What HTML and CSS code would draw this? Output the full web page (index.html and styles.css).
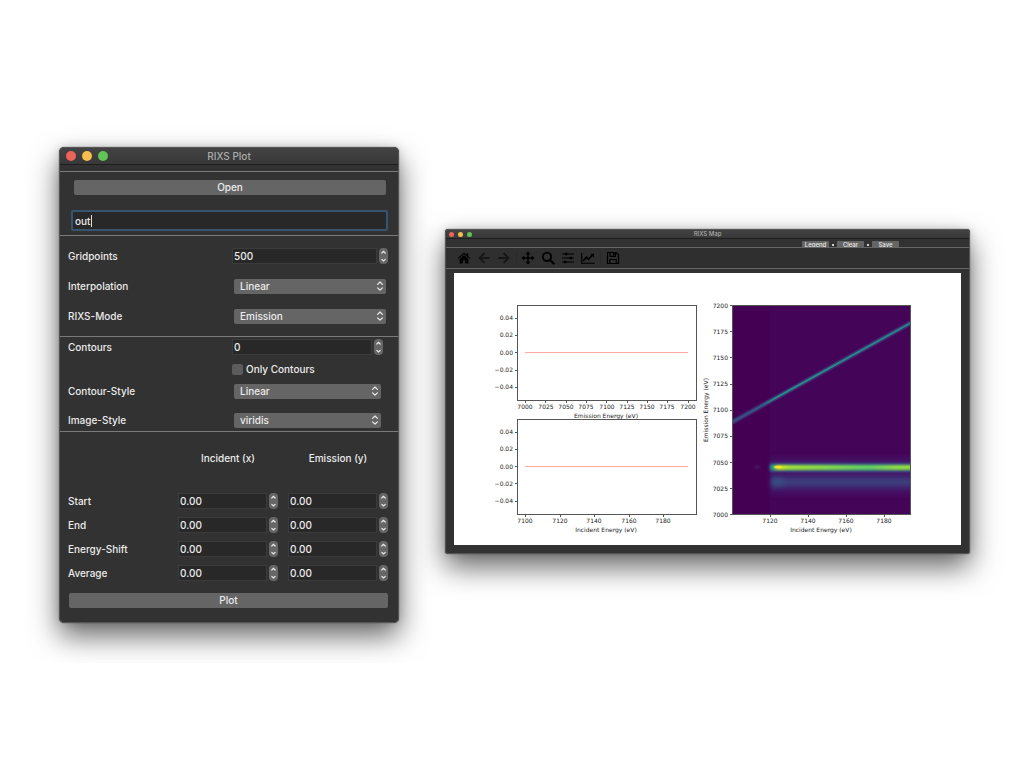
FILE: index.html
```html
<!DOCTYPE html>
<html lang="en">
<head>
<meta charset="utf-8">
<title>RIXS Plot</title>
<link rel="stylesheet" href="styles.css">
</head>
<body>
<svg class="defs" aria-hidden="true">
  <symbol id="updown" viewBox="0 0 8 12"><path d="M1.6 4.4 4 2l2.4 2.4M1.6 7.8 4 10.2l2.4-2.4" fill="none" stroke="currentColor" stroke-width="1.2" stroke-linecap="round" stroke-linejoin="round"/></symbol>
  <symbol id="up" viewBox="0 0 8 8"><path d="M2.3 5 4 3.4 5.700 5" fill="none" stroke="currentColor" stroke-width="1.2" stroke-linecap="round"/></symbol>
  <symbol id="down" viewBox="0 0 8 8"><path d="M2.3 3.400 4 5 5.700 3.400" fill="none" stroke="currentColor" stroke-width="1.2" stroke-linecap="round"/></symbol>
</svg>
<main class="desktop">
  <form class="window plot-window" onsubmit="return false">
    <header class="titlebar">
      <span class="lights"><i class="light red"></i><i class="light yellow"></i><i class="light green"></i></span>
      <h1 class="title">RIXS Plot</h1>
    </header>
    <section class="section file">
      <button class="push open" type="button">Open</button>
      <div class="filename"><input class="file-input" type="text" value="out" aria-label="File name"><span class="caret"></span></div>
    </section>
    <section class="section grid-settings">
      <label for="gridpoints">Gridpoints</label>
      <div class="spin"><input id="gridpoints" type="text" value="500"><span class="stepper"><button type="button" aria-label="Increase"><svg><use href="#up"/></svg></button><button type="button" aria-label="Decrease"><svg><use href="#down"/></svg></button></span></div>
      <label for="interpolation">Interpolation</label>
      <div class="drop"><select id="interpolation"><option>Linear</option></select><svg><use href="#updown"/></svg></div>
      <label for="mode">RIXS-Mode</label>
      <div class="drop"><select id="mode"><option>Emission</option></select><svg><use href="#updown"/></svg></div>
    </section>
    <section class="section contour-settings">
      <label for="contours">Contours</label>
      <div class="spin"><input id="contours" type="text" value="0"><span class="stepper"><button type="button" aria-label="Increase"><svg><use href="#up"/></svg></button><button type="button" aria-label="Decrease"><svg><use href="#down"/></svg></button></span></div>
      <label class="check"><input type="checkbox">Only Contours</label>
      <label for="cstyle">Contour-Style</label>
      <div class="drop"><select id="cstyle"><option>Linear</option></select><svg><use href="#updown"/></svg></div>
      <label class="last" for="istyle">Image-Style</label>
      <div class="drop last"><select id="istyle"><option>viridis</option></select><svg><use href="#updown"/></svg></div>
    </section>
    <section class="section ranges">
      <div class="range-grid">
        <span class="head incident">Incident (x)</span><span class="head">Emission (y)</span>
        <span>Start</span>
        <div class="spin"><input type="text" value="0.00" aria-label="Start incident"><span class="stepper"><button type="button" aria-label="Increase"><svg><use href="#up"/></svg></button><button type="button" aria-label="Decrease"><svg><use href="#down"/></svg></button></span></div>
        <div class="spin"><input type="text" value="0.00" aria-label="Start emission"><span class="stepper"><button type="button" aria-label="Increase"><svg><use href="#up"/></svg></button><button type="button" aria-label="Decrease"><svg><use href="#down"/></svg></button></span></div>
        <span>End</span>
        <div class="spin"><input type="text" value="0.00" aria-label="End incident"><span class="stepper"><button type="button" aria-label="Increase"><svg><use href="#up"/></svg></button><button type="button" aria-label="Decrease"><svg><use href="#down"/></svg></button></span></div>
        <div class="spin"><input type="text" value="0.00" aria-label="End emission"><span class="stepper"><button type="button" aria-label="Increase"><svg><use href="#up"/></svg></button><button type="button" aria-label="Decrease"><svg><use href="#down"/></svg></button></span></div>
        <span>Energy-Shift</span>
        <div class="spin"><input type="text" value="0.00" aria-label="Energy shift incident"><span class="stepper"><button type="button" aria-label="Increase"><svg><use href="#up"/></svg></button><button type="button" aria-label="Decrease"><svg><use href="#down"/></svg></button></span></div>
        <div class="spin"><input type="text" value="0.00" aria-label="Energy shift emission"><span class="stepper"><button type="button" aria-label="Increase"><svg><use href="#up"/></svg></button><button type="button" aria-label="Decrease"><svg><use href="#down"/></svg></button></span></div>
        <span>Average</span>
        <div class="spin"><input type="text" value="0.00" aria-label="Average incident"><span class="stepper"><button type="button" aria-label="Increase"><svg><use href="#up"/></svg></button><button type="button" aria-label="Decrease"><svg><use href="#down"/></svg></button></span></div>
        <div class="spin"><input type="text" value="0.00" aria-label="Average emission"><span class="stepper"><button type="button" aria-label="Increase"><svg><use href="#up"/></svg></button><button type="button" aria-label="Decrease"><svg><use href="#down"/></svg></button></span></div>
      </div>
      <button class="push" type="button">Plot</button>
    </section>
  </form>

  <section class="window map-window">
    <header class="titlebar">
      <span class="lights"><i class="light red"></i><i class="light yellow"></i><i class="light green"></i></span>
      <h2 class="title">RIXS Map</h2>
    </header>
    <div class="actions"><button type="button">Legend</button><i></i><button type="button">Clear</button><i></i><button type="button">Save</button></div>
    <nav class="toolbar">
      <div class="tools">
        <button type="button" aria-label="Home"><svg viewBox="0 0 14 14"><path d="M7 1.500 0.800 7.100l.7.700L7 3l5.500 4.800.7-.7-2-1.800V2.300H9.600v1.500z"/><path d="M7 4 2.600 7.900V12.500H5.800V9.300H8.200v3.200h3.200V7.900z"/></svg></button>
        <button class="dim" type="button" aria-label="Back"><svg viewBox="0 0 14 14"><path d="M7.400 2.200 2.500 7l4.900 4.800M2.700 7h10" fill="none" stroke="currentColor" stroke-width="1.800"/></svg></button>
        <button class="dim" type="button" aria-label="Forward"><svg viewBox="0 0 14 14"><path d="m6.600 2.200 4.900 4.800-4.900 4.800M11.300 7h-10" fill="none" stroke="currentColor" stroke-width="1.800"/></svg></button>
      </div>
      <div class="tools">
        <button type="button" aria-label="Pan"><svg viewBox="0 0 14 14"><path d="M7 .5 9.600 3.300H7.800v2.900h2.900V4.400L13.500 7l-2.800 2.600V7.800H7.800v2.900h1.800L7 13.500l-2.600-2.800h1.800V7.800H3.300v1.800L.5 7l2.800-2.600v1.800h2.900V3.300H4.400z"/></svg></button>
        <button type="button" aria-label="Zoom"><svg viewBox="0 0 14 14"><circle cx="6" cy="5.800" r="4.200" fill="none" stroke="currentColor" stroke-width="1.900"/><path d="m9 9 3.500 3.600" stroke="currentColor" stroke-width="2.200" stroke-linecap="round"/></svg></button>
        <button type="button" aria-label="Subplots"><svg viewBox="0 0 14 14"><path d="M1 3h12M1 7h12M1 11h12" stroke="currentColor" stroke-width="1.200"/><path d="M4 1.700h2.400v2.600H4zM8.600 5.700H11v2.600H8.600zM3 9.700h2.400v2.600H3z"/></svg></button>
        <button type="button" aria-label="Axes"><svg viewBox="0 0 14 14"><path d="M.7 2v10.300h13" fill="none" stroke="currentColor" stroke-width="1.100"/><path d="m2 10 3.500-3.700 2 2 4-4.200" fill="none" stroke="currentColor" stroke-width="1.700"/><path d="M9.200 2.700H13v3.800z"/></svg></button>
      </div>
      <div class="tools save">
        <button type="button" aria-label="Save figure"><svg viewBox="0 0 14 14"><path d="M1.500 1.500h8.700l2.300 2.300v8.700h-11zM4 1.700v3.600h5.500V1.700M3.800 12.300V8.500h6.400v3.800" fill="none" stroke="currentColor" stroke-width="1.200"/><path d="M7 2h1.600v2.600H7z"/></svg></button>
      </div>
    </nav>
    <div class="figure-frame">
      <svg class="figure" viewBox="0 0 507 272" role="img" aria-label="RIXS map with emission and incident cuts">
        <defs>
          <clipPath id="axes"><rect width="179" height="210"/></clipPath>
          <linearGradient id="main"><stop offset="0" stop-color="#21918c" stop-opacity="0"/><stop offset=".04" stop-color="#3fb573"/><stop offset=".07" stop-color="#d2e21b"/><stop offset=".14" stop-color="#9bd93c"/><stop offset=".35" stop-color="#86d549"/><stop offset=".67" stop-color="#5ec962"/><stop offset=".86" stop-color="#8bd646"/><stop offset="1" stop-color="#8bd646"/></linearGradient>
          <linearGradient id="ridge" gradientUnits="userSpaceOnUse" x1="0" y1="117" x2="179" y2="18"><stop offset="0" stop-color="#3b528b"/><stop offset=".17" stop-color="#33638d"/><stop offset=".24" stop-color="#279e8b"/><stop offset="1" stop-color="#2b8c91"/></linearGradient>
          <filter id="soft" x="-10%" y="-200%" width="120%" height="500%"><feGaussianBlur stdDeviation="1 1"/></filter>
          <filter id="haze" x="-10%" y="-80%" width="120%" height="260%"><feGaussianBlur stdDeviation="2 3"/></filter>
          <filter id="fine" x="-5%" y="-5%" width="110%" height="110%"><feGaussianBlur stdDeviation=".5"/></filter>
        </defs>
        <g transform="translate(63 32)">
          <path class="cut" d="M8 47.500H171"/>
          <rect class="axis" x=".5" y=".5" width="179" height="95"/>
          <path class="axis" d="M8.500 96v2M28.500 96v2M49.500 96v2M69.500 96v2M89.500 96v2M110.500 96v2M130.500 96v2M150.500 96v2M171.500 96v2M-2 13.500h2M-2 30.500h2M-2 47.500h2M-2 65.500h2M-2 82.500h2"/>
          <g class="mid"><text x="8" y="104">7000</text><text x="29" y="104">7025</text><text x="49" y="104">7050</text><text x="69" y="104">7075</text><text x="90" y="104">7100</text><text x="110" y="104">7125</text><text x="130" y="104">7150</text><text x="150" y="104">7175</text><text x="171" y="104">7200</text><text x="89" y="113">Emission Energy (eV)</text></g>
          <g class="end"><text x="-4" y="15">0.04</text><text x="-4" y="32">0.02</text><text x="-4" y="50">0.00</text><text x="-4" y="67">−0.02</text><text x="-4" y="84">−0.04</text></g>
        </g>
        <g transform="translate(63 146)">
          <path class="cut" d="M8 47.500H171"/>
          <rect class="axis" x=".5" y=".5" width="179" height="95"/>
          <path class="axis" d="M8.500 96v2M43.500 96v2M77.500 96v2M112.500 96v2M146.500 96v2M-2 13.500h2M-2 30.500h2M-2 47.500h2M-2 64.500h2M-2 82.500h2"/>
          <g class="mid"><text x="8" y="104">7100</text><text x="43" y="104">7120</text><text x="77" y="104">7140</text><text x="112" y="104">7160</text><text x="146" y="104">7180</text><text x="89" y="113">Incident Energy (eV)</text></g>
          <g class="end"><text x="-4" y="15">0.04</text><text x="-4" y="32">0.02</text><text x="-4" y="50">0.00</text><text x="-4" y="67">−0.02</text><text x="-4" y="84">−0.04</text></g>
        </g>
        <g transform="translate(278 32)">
          <g clip-path="url(#axes)">
            <rect width="179" height="210" fill="#440154"/>
            <rect x="38" width="141" height="210" fill="#440457"/>
            <path d="M-5 120 184 15" stroke="#3b3f7d" stroke-width="5" opacity=".7" filter="url(#fine)"/>
            <path d="M-5 120 184 15" stroke="url(#ridge)" stroke-width="2" opacity=".85" filter="url(#fine)"/>
            <rect x="38" y="153" width="150" height="36" fill="#472c7a" opacity=".45" filter="url(#haze)"/>
            <rect x="38" y="158" width="150" height="9" fill="#34608d" opacity=".8" filter="url(#soft)"/>
            <rect x="39" y="173" width="150" height="8" fill="#38588c" opacity=".75" filter="url(#haze)"/>
            <ellipse cx="46" cy="177" rx="7" ry="4" fill="#33638d" opacity=".5" filter="url(#haze)"/>
            <rect x="36" y="160" width="150" height="5" fill="url(#main)" filter="url(#soft)"/>
            <rect x="37" y="161" width="149" height="2" fill="url(#main)" filter="url(#fine)"/>
            <ellipse cx="46" cy="162" rx="4" ry="1.300" fill="#fde725" opacity=".9" filter="url(#fine)"/>
            <ellipse cx="25" cy="162" rx="3" ry="2" fill="#461560" filter="url(#soft)"/>
          </g>
          <rect class="axis" x=".5" y=".5" width="178" height="209"/>
          <path class="axis" d="M38.500 210v2M76.500 210v2M114.500 210v2M152.500 210v2M-2 .5h2M-2 26.500h2M-2 52.500h2M-2 79.500h2M-2 105.500h2M-2 131.500h2M-2 157.500h2M-2 183.500h2M-2 209.500h2"/>
          <g class="mid"><text x="38" y="218">7120</text><text x="76" y="218">7140</text><text x="114" y="218">7160</text><text x="152" y="218">7180</text><text x="89" y="227">Incident Energy (eV)</text><text transform="translate(-24 105) rotate(-90)">Emission Energy (eV)</text></g>
          <g class="end"><text x="-4" y="3">7200</text><text x="-4" y="29">7175</text><text x="-4" y="55">7150</text><text x="-4" y="81">7125</text><text x="-4" y="107">7100</text><text x="-4" y="133">7075</text><text x="-4" y="160">7050</text><text x="-4" y="186">7025</text><text x="-4" y="212">7000</text></g>
        </g>
      </svg>
    </div>
  </section>
</main>
</body>
</html>
```

FILE: styles.css
```css
* { box-sizing: border-box; }

body {
  margin: 0;
  background: #fff;
  color: #ebebeb;
  font: 500 10px/16px Inter, "Liberation Sans", sans-serif;
}

button, input, select {
  font: inherit;
  color: inherit;
  border: 0;
  padding: 0;
  margin: 0;
}

.defs { display: none; }

.desktop {
  display: grid;
  grid-template-columns: 340fr 525fr;
  gap: 46px;
  align-items: start;
  padding: 147px 54px 40px 59px;
}

.window {
  min-width: 0;
  background: #323232;
  border: 1px solid #555;
  border-radius: 5px;
  box-shadow: 0 0 1px #222, 0 13px 29px rgba(0, 0, 0, .6), 0 0 8px rgba(0, 0, 0, .15);
}

.titlebar {
  display: grid;
  grid-template-columns: 1fr auto 1fr;
  align-items: center;
  height: 17px;
  background: linear-gradient(#434343, #383838);
  border-bottom: 1px solid #1e1e1e;
  border-radius: 4px 4px 0 0;
}

.title {
  margin: 0;
  font-size: 10px;
  font-weight: 500;
  color: #aaa;
}

.lights { display: flex; gap: 6px; padding-left: 6px; }
.light { width: 10px; height: 10px; border-radius: 50%; }
.red { background: #ed6559; }
.yellow { background: #f6be4f; }
.green { background: #60c554; }

.section { border-top: 1px solid #7a7a7a; }

.push {
  display: block;
  width: 100%;
  height: 15px;
  line-height: 15px;
  background: #656565;
  border-radius: 2px;
}

.file {
  margin-top: 6px;
  padding: 8px 10px 4px 11px;
}

.file .open { width: auto; min-width: calc(100% - 5px); margin-left: 3px; }

.filename { position: relative; margin-top: 15px; }

.file-input {
  display: block;
  width: 100%;
  height: 21px;
  padding: 1px 2px 0;
  background: #282828;
  border: 2px solid #34546f;
  border-radius: 2px;
  outline: 0;
}

.caret {
  position: absolute;
  left: 20px;
  top: 5px;
  width: 1px;
  height: 12px;
  background: #ddd;
}

.grid-settings, .contour-settings {
  display: grid;
  grid-template-columns: 163fr 156fr;
  column-gap: 1px;
  grid-auto-rows: 16px;
  align-items: center;
}

.grid-settings { row-gap: 14px; padding: 12px 10px 12px 8px; }

.contour-settings {
  row-gap: 6px;
  padding: 2px 15px 3px 8px;
  grid-template-columns: 163fr 151fr;
  grid-template-rows: 16px 16px 16px 23px;
}

.contour-settings .last { margin-top: 7px; }

.spin { display: grid; grid-template-columns: 1fr 9px; gap: 2px; min-width: 0; }

.spin input {
  width: 100%;
  min-width: 0;
  height: 16px;
  padding-left: 1px;
  background: #282828;
  border: 1px solid #3b3b3b;
}

.stepper {
  display: grid;
  grid-template-rows: 8px 8px;
  overflow: hidden;
  background: #666;
  border-radius: 4px;
}

.stepper button { display: block; height: 8px; background: none; }
.stepper svg { display: block; width: 9px; height: 8px; }

.drop { display: grid; margin-left: 2px; margin-right: 2px; align-items: center; }
.drop > * { grid-area: 1 / 1; }

.drop select {
  width: 100%;
  height: 15px;
  padding-left: 6px;
  line-height: 15px;
  appearance: none;
  background: #656565;
  border-radius: 2px;
}

.drop svg { justify-self: end; width: 8px; height: 12px; margin-right: 2px; pointer-events: none; }

.check { grid-column: 2; display: flex; align-items: center; gap: 3px; }

.check input {
  appearance: none;
  width: 11px;
  height: 11px;
  background: #5c5c5c;
  border-radius: 2px;
}

.ranges { padding: 18px 10px 14px 9px; }

.range-grid {
  display: grid;
  grid-template-columns: 1fr 1fr 1fr;
  column-gap: 10px;
  row-gap: 8px;
  margin-bottom: 12px;
  margin-left: -1px;
}

.range-grid .head { text-align: center; margin-bottom: 19px; }
.incident { grid-column: 2; }

.map-window { margin-top: 82px; border-radius: 3px; }
.map-window .titlebar { height: 9px; line-height: 8px; border-radius: 2px 2px 0 0; }
.map-window .title { font-size: 6px; }
.map-window .lights { gap: 4px; padding-left: 3px; }
.map-window .light { width: 5px; height: 5px; }

.actions {
  display: flex;
  justify-content: flex-end;
  gap: 3px;
  height: 8px;
  padding: 2px 70px 0 0;
  overflow: hidden;
}

.actions button {
  width: 27px;
  height: 8px;
  font-size: 6px;
  line-height: 8px;
  background: #656565;
  border-radius: 1px;
}

.actions i { width: 2px; height: 2px; margin-top: 3px; background: #ccc; }

.toolbar {
  display: flex;
  align-items: center;
  height: 22px;
  padding-left: 11px;
  background: #2f2f2f;
  border-top: 1px solid #666;
  border-bottom: 1px solid #666;
}

.tools { display: flex; gap: 6px; }
.tools + .tools { margin-left: 5px; padding-left: 4px; border-left: 1px solid #2a2a2a; }
.tools + .save { padding-left: 5px; }
.tools button { width: 14px; height: 14px; background: none; color: #000; }
.tools .dim { color: #161616; }
.tools svg { display: block; width: 14px; height: 14px; fill: currentColor; }

.figure-frame { padding: 4px 8px 8px; }
.figure { display: block; width: 100%; background: #fff; }
.figure text { font: 6px "DejaVu Sans", sans-serif; fill: #222; }
.mid { text-anchor: middle; }
.end { text-anchor: end; }
.axis { fill: none; stroke: #555; stroke-width: 1; }
.cut { fill: none; stroke: #ffaaa5; stroke-width: 1; }
```
